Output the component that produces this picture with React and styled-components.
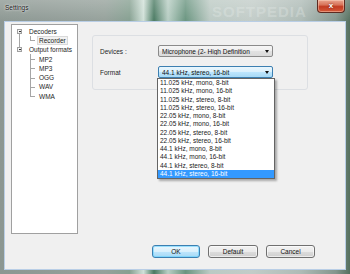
import React from 'react';
import styled, { createGlobalStyle } from 'styled-components';

const GlobalStyle = createGlobalStyle`
  html, body {
    margin: 0;
    padding: 0;
    overflow: hidden;
  }
  body {
    font-family: 'Liberation Sans', Arial, sans-serif;
    font-size: 6.5px;
    color: #000;
  }
`;

const Window = styled.div`
  width: 350px;
  height: 274px;
  display: flex;
  flex-direction: column;
  box-sizing: border-box;
  background:
    linear-gradient(180deg, rgba(255, 255, 255, 0.22) 0px, rgba(255, 255, 255, 0) 22px),
    linear-gradient(90deg, #8c9792 0%, #95a19b 30%, #86a091 37%, #d0e0d8 41%, #4a7a62 44%, #b8cec4 48%,
      #6a9580 53%, #bccac4 60%, #c2ccc8 72%, #aebbb6 86%, #84958d 96%, #55705f 100%);
`;

const TitleBar = styled.div`
  position: relative;
  height: 22px;
  flex-shrink: 0;
  display: flex;
  align-items: flex-start;
  justify-content: space-between;
`;

const Title = styled.span`
  margin: 4px 0 0 5px;
  font-size: 6.5px;
  color: #141414;
  text-shadow: 0 0 3px rgba(255, 255, 255, 0.9), 0 0 1px rgba(255, 255, 255, 0.8);
`;

const Watermark = styled.span`
  position: absolute;
  left: 212px;
  top: 3px;
  font-size: 15px;
  font-weight: bold;
  letter-spacing: 1px;
  color: rgba(235, 240, 238, 0.3);
  pointer-events: none;
  white-space: nowrap;
`;

const CloseButton = styled.div`
  width: 28px;
  height: 13px;
  margin-right: 5px;
  box-sizing: border-box;
  border: 1px solid #5e2a20;
  border-top: none;
  border-radius: 0 0 4px 4px;
  background: linear-gradient(180deg, #e9a58f 0%, #d8745a 40%, #c23c22 55%, #d45a3a 100%);
  box-shadow: inset 0 0 0 1px rgba(255, 220, 200, 0.45);
  display: flex;
  align-items: center;
  justify-content: center;
  color: #fff;
  font-weight: bold;
  font-size: 8px;
  line-height: 1;
  text-shadow: 0 0 2px #5a1a10;
`;

const Client = styled.div`
  flex: 1;
  margin: 0 5px 5px 5px;
  padding: 2px 0 0 6px;
  display: flex;
  background: #f0f0f0;
  box-shadow: 0 0 0 1px #b9cee6;
`;

const Tree = styled.div`
  width: 67px;
  height: 210px;
  box-sizing: border-box;
  border: 1px solid #a0a0a0;
  background: #fff;
  padding-top: 1.5px;
  flex-shrink: 0;
`;

const Row = styled.div`
  position: relative;
  height: 9.3px;
  display: flex;
  align-items: center;
  padding-left: ${p => (p.$level ? 25 : 15)}px;
  color: #1e1e1e;
  white-space: nowrap;

  &::before {
    content: ${p => (p.$level ? "''" : 'none')};
    position: absolute;
    left: 18px;
    top: 0;
    width: 1px;
    height: ${p => (p.$last ? '50%' : '100%')};
    background: #a6a6a6;
  }

  &::after {
    content: ${p => (p.$level ? "''" : 'none')};
    position: absolute;
    left: 18px;
    top: 50%;
    width: 5px;
    height: 1px;
    background: #a6a6a6;
  }
`;

const Trunk = styled.span`
  position: absolute;
  left: 7px;
  width: 1px;
  background: #a6a6a6;
  top: ${p => (p.$part === 'bottom' ? 'calc(50% + 3px)' : '0')};
  bottom: ${p => (p.$part === 'top' ? 'calc(50% + 3px)' : '0')};
`;

const Expander = styled.span`
  position: absolute;
  left: 5px;
  top: calc(50% - 2.5px);
  width: 5px;
  height: 5px;
  box-sizing: border-box;
  border: 1px solid #a0a0a0;
  background: linear-gradient(135deg, #fff, #e4e4e4);

  &::after {
    content: '';
    position: absolute;
    left: 0.5px;
    top: 1px;
    width: 2px;
    height: 1px;
    background: #333;
  }
`;

const Label = styled.span`
  padding: 0 1px;
  border: 1px solid ${p => (p.$selected ? '#d9d9d9' : 'transparent')};
  background: ${p => (p.$selected ? '#f2f2f2' : 'transparent')};
  line-height: 7px;
`;

const RightPane = styled.div`
  flex: 1;
  display: flex;
  flex-direction: column;
  padding: 11px 30px 11px 14px;
`;

const GroupBox = styled.div`
  width: 216px;
  height: 55px;
  box-sizing: border-box;
  border: 1px solid #dcdfe3;
  border-radius: 3px;
  padding: 9px 0 0 7px;
  display: flex;
  flex-direction: column;
  gap: 9px;
`;

const FieldRow = styled.div`
  display: flex;
  align-items: center;
  height: 12px;
`;

const FieldLabel = styled.span`
  width: 58px;
  color: #1e1e1e;
`;

const ComboWrap = styled.div`
  position: relative;
`;

const Combo = styled.div`
  width: 115px;
  height: 12px;
  box-sizing: border-box;
  border: 1px solid ${p => (p.$active ? '#3c7fb1' : '#8a8a8a')};
  border-radius: 2px;
  background: ${p =>
    p.$active
      ? 'linear-gradient(180deg, #eaf6fd 0%, #d9f0fc 50%, #bee6fd 50%, #a7d9f5 100%)'
      : 'linear-gradient(180deg, #f6f6f6 0%, #ededed 50%, #e2e2e2 50%, #dadada 100%)'};
  display: flex;
  align-items: center;
  padding-left: 3px;
  color: #111;
  white-space: nowrap;
  overflow: hidden;
`;

const ComboText = styled.span`
  flex: 1;
  overflow: hidden;
`;

const Arrow = styled.span`
  width: 0;
  height: 0;
  margin: 1px 3px 0 2px;
  border-left: 2.5px solid transparent;
  border-right: 2.5px solid transparent;
  border-top: 3px solid #111;
`;

const DropList = styled.div`
  position: absolute;
  top: 100%;
  left: -1px;
  width: 118px;
  box-sizing: border-box;
  border: 1px solid #646464;
  background: #fff;
  box-shadow: 2px 2px 2px rgba(0, 0, 0, 0.3);
  z-index: 2;
`;

const Option = styled.div`
  height: 8.25px;
  line-height: 8.25px;
  padding-left: 2px;
  white-space: nowrap;
  color: ${p => (p.$selected ? '#fff' : '#1a1a1a')};
  background: ${p => (p.$selected ? '#3399ff' : 'transparent')};
`;

const ButtonRow = styled.div`
  margin-top: auto;
  display: flex;
  justify-content: flex-end;
  gap: 8px;
`;

const Button = styled.div`
  width: ${p => p.$w}px;
  height: 13px;
  box-sizing: border-box;
  border: 1px solid ${p => (p.$primary ? '#3c7fb1' : '#707070')};
  border-radius: 3px;
  background: ${p =>
    p.$primary
      ? 'linear-gradient(180deg, #eaf6fd 0%, #d9f0fc 50%, #bee6fd 50%, #a7d9f5 100%)'
      : 'linear-gradient(180deg, #f2f2f2 0%, #ebebeb 50%, #dddddd 50%, #cfcfcf 100%)'};
  box-shadow: inset 0 0 0 1px ${p => (p.$primary ? 'rgba(100, 210, 255, 0.6)' : 'rgba(255, 255, 255, 0.6)')};
  display: flex;
  align-items: center;
  justify-content: center;
  color: #111;
`;

const formats = [
  '11.025 kHz, mono, 8-bit',
  '11.025 kHz, mono, 16-bit',
  '11.025 kHz, stereo, 8-bit',
  '11.025 kHz, stereo, 16-bit',
  '22.05 kHz, mono, 8-bit',
  '22.05 kHz, mono, 16-bit',
  '22.05 kHz, stereo, 8-bit',
  '22.05 kHz, stereo, 16-bit',
  '44.1 kHz, mono, 8-bit',
  '44.1 kHz, mono, 16-bit',
  '44.1 kHz, stereo, 8-bit',
  '44.1 kHz, stereo, 16-bit',
];

const outputs = ['MP2', 'MP3', 'OGG', 'WAV', 'WMA'];

export default function App() {
  const current = '44.1 kHz, stereo, 16-bit';

  return (
    <>
      <GlobalStyle />
      <Window>
        <TitleBar>
          <Title>Settings</Title>
          <Watermark>SOFTPEDIA</Watermark>
          <CloseButton>x</CloseButton>
        </TitleBar>
        <Client>
          <Tree>
            <Row>
              <Expander />
              <Trunk $part="bottom" />
              <Label>Decoders</Label>
            </Row>
            <Row $level={1} $last>
              <Trunk />
              <Label $selected>Recorder</Label>
            </Row>
            <Row>
              <Expander />
              <Trunk $part="top" />
              <Label>Output formats</Label>
            </Row>
            {outputs.map((o, i) => (
              <Row key={o} $level={1} $last={i === outputs.length - 1}>
                <Label>{o}</Label>
              </Row>
            ))}
          </Tree>
          <RightPane>
            <GroupBox>
              <FieldRow>
                <FieldLabel>Devices :</FieldLabel>
                <Combo>
                  <ComboText>Microphone (2- High Definition</ComboText>
                  <Arrow />
                </Combo>
              </FieldRow>
              <FieldRow>
                <FieldLabel>Format</FieldLabel>
                <ComboWrap>
                  <Combo $active>
                    <ComboText>{current}</ComboText>
                    <Arrow />
                  </Combo>
                  <DropList>
                    {formats.map(f => (
                      <Option key={f} $selected={f === current}>{f}</Option>
                    ))}
                  </DropList>
                </ComboWrap>
              </FieldRow>
            </GroupBox>
            <ButtonRow>
              <Button $w={48} $primary>OK</Button>
              <Button $w={50}>Default</Button>
              <Button $w={49}>Cancel</Button>
            </ButtonRow>
          </RightPane>
        </Client>
      </Window>
    </>
  );
}
